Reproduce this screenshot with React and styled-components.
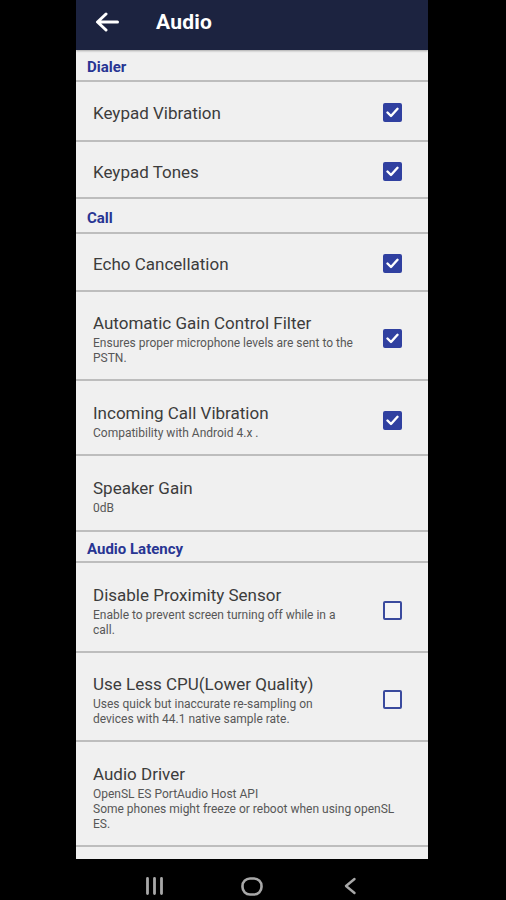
import React from "react";
import styled, { createGlobalStyle } from "styled-components";

const Global = createGlobalStyle`
  html, body { margin: 0; padding: 0; background: #000; }
  body { font-family: Roboto, "Noto Sans", Arial, sans-serif; }
  * { box-sizing: border-box; }
`;

const Page = styled.div`
  width: 506px;
  height: 900px;
  background: #000;
  display: flex;
  flex-direction: column;
  overflow: hidden;
`;

const Screen = styled.div`
  margin-left: 76px;
  width: 352px;
  height: 859px;
  background: #f0f0f0;
  overflow: hidden;
  display: flex;
  flex-direction: column;
`;

const AppBar = styled.div`
  height: 50px;
  flex: none;
  background: #1c2340;
  display: flex;
  align-items: center;
  padding: 0 0 6px 19px;
  gap: 37px;
  box-shadow: 0 1px 2px rgba(0,0,0,0.3);
`;

const Title = styled.div`
  color: #fff;
  font-size: 21px;
  font-weight: 700;
  letter-spacing: 0.2px;
`;

const Section = styled.div`
  height: ${(p) => p.$h || 32}px;
  flex: none;
  display: flex;
  align-items: center;
  padding: 4px 0 0 11px;
  color: #283593;
  font-size: 15px;
  font-weight: 700;
  border-bottom: 2px solid #bdbdbd;
`;

const Row = styled.div`
  flex: none;
  display: flex;
  align-items: center;
  min-height: ${(p) => p.$h}px;
  padding: 0 26px 0 17px;
  border-bottom: 2px solid #bdbdbd;
`;

const Texts = styled.div`
  flex: 1;
  display: flex;
  flex-direction: column;
  padding-top: ${(p) => p.$pad}px;
`;

const ItemTitle = styled.div`
  font-size: 17px;
  line-height: 22px;
  color: #3c3c3c;
  white-space: nowrap;
`;

const Sub = styled.div`
  margin-top: 2px;
  font-size: 12px;
  line-height: 15px;
  color: #575757;
  white-space: pre-line;
`;

const Box = styled.div`
  width: 19px;
  height: 19px;
  flex: none;
  margin-top: ${(p) => p.$shift}px;
  border-radius: 2px;
  background: ${(p) => (p.$on ? "#3040a0" : "#f4f4f6")};
  border: 2px solid ${(p) => (p.$on ? "#3040a0" : "#3a4a9e")};
  display: flex;
  align-items: center;
  justify-content: center;
`;

const Nav = styled.div`
  height: 41px;
  margin-left: 105px;
  width: 294px;
  display: flex;
  align-items: center;
  padding-top: 13px;
`;

const NavSlot = styled.div`
  width: 98px;
  display: flex;
  justify-content: center;
  align-items: center;
`;

const Check = ({ on, shift }) => (
  <Box $on={on} $shift={shift}>
    {on && (
      <svg width="13" height="11" viewBox="0 0 13 11">
        <path d="M1.5 5.5 L5 9 L11.5 1.8" fill="none" stroke="#fff" strokeWidth="2.4" strokeLinecap="round" strokeLinejoin="round" />
      </svg>
    )}
  </Box>
);

const Item = ({ title, sub, check, h }) => (
  <Row $h={h}>
    <Texts $pad={sub ? 7 : 4}>
      <ItemTitle>{title}</ItemTitle>
      {sub && <Sub>{sub}</Sub>}
    </Texts>
    {check !== undefined && <Check on={check} shift={sub ? 6 : 3} />}
  </Row>
);

export default function App() {
  return (
    <>
      <Global />
      <Page>
        <Screen>
          <AppBar>
            <svg width="24" height="20" viewBox="0 0 24 20">
              <path d="M22.5 10 H3 M11 2 L2.5 10 L11 18" fill="none" stroke="#fff" strokeWidth="3" strokeLinecap="round" strokeLinejoin="round" />
            </svg>
            <Title>Audio</Title>
          </AppBar>
          <Section $h={32}>Dialer</Section>
          <Item title="Keypad Vibration" check={true} h={60} />
          <Item title="Keypad Tones" check={true} h={57} />
          <Section $h={35}>Call</Section>
          <Item title="Echo Cancellation" check={true} h={58} />
          <Item
            title="Automatic Gain Control Filter"
            sub={"Ensures proper microphone levels are sent to the\nPSTN."}
            check={true}
            h={89}
          />
          <Item title="Incoming Call Vibration" sub="Compatibility with Android 4.x ." check={true} h={75} />
          <Item title="Speaker Gain" sub="0dB" h={76} />
          <Section $h={31}>Audio Latency</Section>
          <Item
            title="Disable Proximity Sensor"
            sub={"Enable to prevent screen turning off while in a\ncall."}
            check={false}
            h={90}
          />
          <Item
            title="Use Less CPU(Lower Quality)"
            sub={"Uses quick but inaccurate re-sampling on\ndevices with 44.1 native sample rate."}
            check={false}
            h={89}
          />
          <Item
            title="Audio Driver"
            sub={"OpenSL ES PortAudio Host API\nSome phones might freeze or reboot when using openSL\nES."}
            h={105}
          />
          <Item title="Audio Processing" sub="Advanced audio settings" h={75} />
        </Screen>
        <Nav>
          <NavSlot>
            <svg width="19" height="18" viewBox="0 0 19 18">
              <path d="M2.5 1.5 V16.5 M9.5 1.5 V16.5 M16.5 1.5 V16.5" stroke="#a8a8a8" strokeWidth="2.8" strokeLinecap="round" />
            </svg>
          </NavSlot>
          <NavSlot>
            <svg width="22" height="19" viewBox="0 0 22 19">
              <rect x="1.5" y="1.5" width="19" height="16" rx="7.5" fill="none" stroke="#a8a8a8" strokeWidth="2.6" />
            </svg>
          </NavSlot>
          <NavSlot>
            <svg width="14" height="18" viewBox="0 0 14 18">
              <path d="M11.5 2 L3 9 L11.5 16" fill="none" stroke="#a8a8a8" strokeWidth="2.4" strokeLinecap="round" strokeLinejoin="round" />
            </svg>
          </NavSlot>
        </Nav>
      </Page>
    </>
  );
}
